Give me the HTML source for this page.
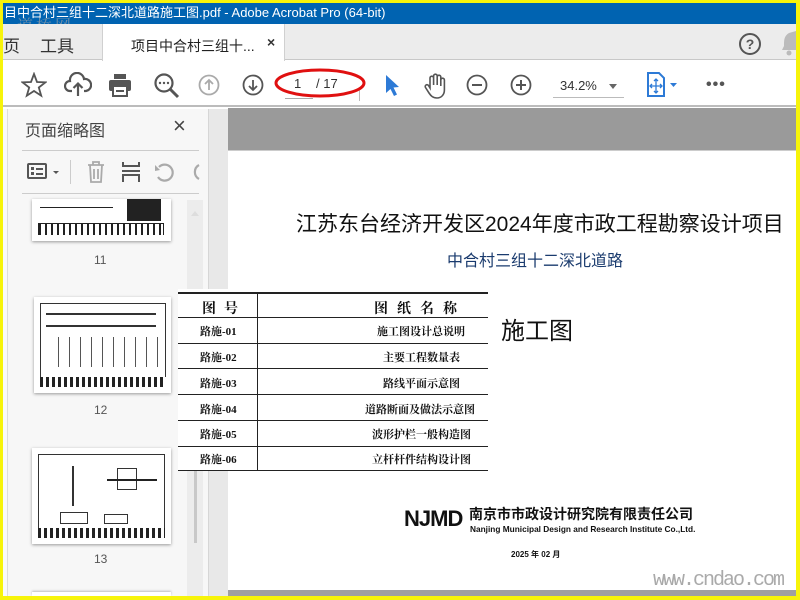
<!DOCTYPE html>
<html><head><meta charset="utf-8"><style>
*{margin:0;padding:0;box-sizing:border-box}
body{width:800px;height:600px;position:relative;overflow:hidden;background:#f7f40a;font-family:"Liberation Sans","Noto Sans CJK SC",sans-serif}
.a{position:absolute}
.ic{position:absolute}
</style></head><body>
<div class="a" style="left:3px;top:3px;width:793px;height:593px;background:#fff;overflow:hidden">
 <div class="a" style="left:0;top:0;width:793px;height:21px;background:#0063b1;color:#fff;font-size:13px;line-height:20px;padding-left:1px;white-space:nowrap">目中合村三组十二深北道路施工图.pdf - Adobe Acrobat Pro (64-bit)</div>
 <div class="a" style="left:14px;top:10px;color:#8a9aa8;font-size:16px;font-family:'Noto Serif CJK SC',serif;letter-spacing:3px;opacity:.8">道桥网</div>
 <div class="a" style="left:0;top:21px;width:793px;height:36px;background:#ececec;border-bottom:1px solid #c8c8c8"></div>
 <div class="a" style="left:0;top:29px;font-size:17px;color:#333">页</div>
 <div class="a" style="left:37px;top:29px;font-size:17px;color:#333">工具</div>
 <div class="a" style="left:99px;top:21px;width:183px;height:37px;background:#fff;border-left:1px solid #d0d0d0;border-right:1px solid #d0d0d0"></div>
 <div class="a" style="left:128px;top:33px;font-size:14px;color:#222">项目中合村三组十...</div>
 <div class="a" style="left:264px;top:31px;font-size:14px;color:#333;font-weight:bold">×</div>
 <svg class="ic" style="left:735px;top:29px" width="24" height="24"><circle cx="12" cy="12" r="10" fill="none" stroke="#555" stroke-width="2"/><text x="12" y="17" font-size="14" text-anchor="middle" fill="#555" font-weight="bold" font-family="Liberation Sans">?</text></svg>
 <svg class="ic" style="left:778px;top:28px" width="16" height="26"><path d="M8 2 C3 5 3 9 3 15 L1 19 H15 V0" fill="#bbb"/><circle cx="8" cy="22" r="2.5" fill="#bbb"/></svg>
 <div class="a" style="left:0;top:58px;width:793px;height:46px;background:#fff;border-bottom:2px solid #bcbcbc"></div>
 <svg class="ic" style="left:18px;top:69px" width="26" height="26"><path d="M13 2 L16 10 L24.5 10.3 L17.8 15.5 L20.2 23.7 L13 19 L5.8 23.7 L8.2 15.5 L1.5 10.3 L10 10 Z" fill="none" stroke="#555" stroke-width="1.8"/></svg>
 <svg class="ic" style="left:61px;top:69px" width="28" height="26"><path d="M8 19 H6 A5 5 0 0 1 6 9 A7 7 0 0 1 20 7 A5.5 5.5 0 0 1 22 19 H20" fill="none" stroke="#555" stroke-width="2.2"/><path d="M14 24 V12 M9.5 16 L14 11.5 L18.5 16" fill="none" stroke="#555" stroke-width="2.2"/></svg>
 <svg class="ic" style="left:105px;top:70px" width="24" height="24"><rect x="6" y="1" width="12" height="5" fill="#555"/><rect x="1" y="7" width="22" height="11" rx="2" fill="#555"/><rect x="5" y="13" width="14" height="10" fill="#fff" stroke="#555" stroke-width="2"/><rect x="8" y="17" width="8" height="2" fill="#555"/></svg>
 <svg class="ic" style="left:150px;top:69px" width="27" height="27"><circle cx="11" cy="11" r="8.5" fill="none" stroke="#555" stroke-width="2.2"/><path d="M17 17 L25 25" stroke="#555" stroke-width="3"/><circle cx="7" cy="11" r="1.2" fill="#555"/><circle cx="11" cy="11" r="1.2" fill="#555"/><circle cx="15" cy="11" r="1.2" fill="#555"/></svg>
 <svg class="ic" style="left:195px;top:71px" width="22" height="22"><circle cx="11" cy="11" r="9.5" fill="none" stroke="#aaa" stroke-width="1.8"/><path d="M11 16 V6 M7 10 L11 6 L15 10" fill="none" stroke="#aaa" stroke-width="1.8"/></svg>
 <svg class="ic" style="left:239px;top:71px" width="22" height="22"><circle cx="11" cy="11" r="9.5" fill="none" stroke="#555" stroke-width="1.8"/><path d="M11 6 V16 M7 12 L11 16 L15 12" fill="none" stroke="#555" stroke-width="1.8"/></svg>
 <div class="a" style="left:282px;top:95px;width:28px;height:1px;background:#aaa"></div>
 <div class="a" style="left:291px;top:73px;font-size:13px;color:#333">1</div>
 <div class="a" style="left:313px;top:73px;font-size:13px;color:#333">/ 17</div>
 <div class="a" style="left:356px;top:86px;width:1px;height:12px;background:#bbb"></div>
 <svg class="ic" style="left:270px;top:63px" width="94" height="36"><ellipse cx="47" cy="17" rx="44" ry="13" fill="none" stroke="#e01010" stroke-width="3"/></svg>
 <svg class="ic" style="left:380px;top:70px" width="20" height="26"><path d="M3 2 L3 20 L7.5 16 L11 23 L14 21.5 L10.5 14.5 L16 14 Z" fill="#2d7ad6"/></svg>
 <svg class="ic" style="left:420px;top:69px" width="26" height="28"><path d="M7 16 V6 a1.8 1.8 0 0 1 3.6 0 V13 V4 a1.8 1.8 0 0 1 3.6 0 V13 V5 a1.8 1.8 0 0 1 3.6 0 V14 V8 a1.8 1.8 0 0 1 3.6 0 V18 C21.4 23 18 26 14 26 C10 26 8 24 6 21 L2.5 15.5 a1.8 1.8 0 0 1 3 -2 Z" fill="none" stroke="#555" stroke-width="1.6"/></svg>
 <svg class="ic" style="left:463px;top:71px" width="22" height="22"><circle cx="11" cy="11" r="9.5" fill="none" stroke="#555" stroke-width="1.8"/><path d="M6 11 H16" stroke="#555" stroke-width="2"/></svg>
 <svg class="ic" style="left:507px;top:71px" width="22" height="22"><circle cx="11" cy="11" r="9.5" fill="none" stroke="#555" stroke-width="1.8"/><path d="M6 11 H16 M11 6 V16" stroke="#555" stroke-width="2"/></svg>
 <div class="a" style="left:557px;top:75px;font-size:13px;color:#333">34.2%</div>
 <div class="a" style="left:606px;top:81px;border:4px solid transparent;border-top:5px solid #666"></div>
 <div class="a" style="left:550px;top:94px;width:71px;height:1px;background:#bbb"></div>
 <svg class="ic" style="left:643px;top:69px" width="36" height="26"><path d="M2 1 H13 L18 6 V24 H2 Z" fill="none" stroke="#2d7ad6" stroke-width="2"/><path d="M10 7 V21 M4 14 H16 M8 9 L10 7 L12 9 M8 19 L10 21 L12 19 M6 12 L4 14 L6 16 M14 12 L16 14 L14 16" fill="none" stroke="#2d7ad6" stroke-width="1.3"/><path d="M24 11 H31 L27.5 15 Z" fill="#2d7ad6"/></svg>
 <div class="a" style="left:703px;top:73px;font-size:16px;color:#555;letter-spacing:1px;font-weight:bold">•••</div>

 <div class="a" style="left:0;top:106px;width:206px;height:487px;background:#f7f7f7;border-right:1px solid #d6d6d6"></div>
 <div class="a" style="left:0;top:106px;width:5px;height:487px;background:#fafafa;border-right:1px solid #ddd"></div>
 <div class="a" style="left:22px;top:114px;font-size:16px;color:#444">页面缩略图</div>
 <div class="a" style="left:170px;top:110px;font-size:22px;color:#444">×</div>
 <div class="a" style="left:19px;top:147px;width:177px;height:1px;background:#ccc"></div>
 <div class="a" style="left:19px;top:190px;width:177px;height:1px;background:#ccc"></div>
 <svg class="ic" style="left:22px;top:158px" width="40" height="22"><rect x="3" y="3" width="18" height="14" rx="1" fill="none" stroke="#555" stroke-width="2"/><rect x="6" y="6" width="3" height="3" fill="#555"/><rect x="6" y="11" width="3" height="3" fill="#555"/><rect x="11" y="7" width="7" height="2" fill="#555"/><rect x="11" y="12" width="7" height="2" fill="#555"/><path d="M28 10 H34 L31 13 Z" fill="#555"/></svg>
 <div class="a" style="left:67px;top:157px;width:1px;height:24px;background:#ccc"></div>
 <svg class="ic" style="left:82px;top:157px" width="22" height="24"><path d="M3 5 H19 M8 5 V2 H14 V5 M5 5 L6 22 H16 L17 5 M9 9 V19 M13 9 V19" fill="none" stroke="#aaa" stroke-width="1.8"/></svg>
 <svg class="ic" style="left:117px;top:157px" width="22" height="24"><path d="M3 2 V6 H19 V2 M3 22 V15 H19 V22 M2 11 H20" fill="none" stroke="#555" stroke-width="2"/></svg>
 <svg class="ic" style="left:150px;top:158px" width="48" height="22"><path d="M6 6 A8 8 0 1 1 5 16" fill="none" stroke="#aaa" stroke-width="2.2"/><path d="M2 4 L7 9 L2 10 Z" fill="#aaa"/><path d="M46 4 A8 8 0 0 0 46 18" fill="none" stroke="#aaa" stroke-width="2.2"/></svg>
 <div class="a" style="left:29px;top:196px;width:139px;height:42px;background:#fff;box-shadow:0 1px 3px #999;overflow:hidden">
  <div class="a" style="left:8px;top:8px;width:73px;height:1px;background:#222"></div>
  <div class="a" style="left:95px;top:0;width:34px;height:22px;background:#222"></div>
  <div class="a" style="left:6px;top:24px;width:126px;height:12px;border:1px solid #222;border-bottom:0;background:repeating-linear-gradient(90deg,#222 0 2px,#fff 2px 6px)"></div>
 </div>
 <div class="a" style="left:91px;top:250px;font-size:12px;color:#555">11</div>
 <div class="a" style="left:31px;top:294px;width:137px;height:96px;background:#fff;box-shadow:0 1px 3px #999">
  <div class="a" style="left:6px;top:6px;width:126px;height:84px;border:1px solid #333"></div>
  <div class="a" style="left:12px;top:16px;width:110px;height:14px;border-top:2px solid #333;border-bottom:2px solid #333"></div>
  <div class="a" style="left:14px;top:40px;width:110px;height:30px;background:repeating-linear-gradient(90deg,transparent 0 10px,#555 10px 11px)"></div>
  <div class="a" style="left:6px;top:80px;width:126px;height:10px;background:repeating-linear-gradient(90deg,#222 0 3px,#fff 3px 6px)"></div>
 </div>
 <div class="a" style="left:91px;top:400px;font-size:12px;color:#555">12</div>
 <div class="a" style="left:29px;top:445px;width:139px;height:96px;background:#fff;box-shadow:0 1px 3px #999">
  <div class="a" style="left:6px;top:6px;width:127px;height:84px;border:1px solid #333"></div>
  <div class="a" style="left:40px;top:18px;width:2px;height:40px;background:#333"></div>
  <div class="a" style="left:85px;top:20px;width:20px;height:22px;border:1px solid #333"></div>
  <div class="a" style="left:75px;top:31px;width:50px;height:2px;background:#222"></div>
  <div class="a" style="left:28px;top:64px;width:28px;height:12px;border:1px solid #333"></div>
  <div class="a" style="left:72px;top:66px;width:24px;height:10px;border:1px solid #333"></div>
  <div class="a" style="left:6px;top:80px;width:127px;height:10px;background:repeating-linear-gradient(90deg,#222 0 3px,#fff 3px 6px)"></div>
 </div>
 <div class="a" style="left:91px;top:549px;font-size:12px;color:#555">13</div>
 <div class="a" style="left:29px;top:589px;width:139px;height:4px;background:#fff;box-shadow:0 -1px 2px #bbb"></div>
 <div class="a" style="left:184px;top:197px;width:16px;height:396px;background:#ececec"></div>
 <div class="a" style="left:191px;top:300px;width:3px;height:240px;background:#c8c8c8"></div>
 <div class="a" style="left:188px;top:204px;border:4px solid transparent;border-bottom:5px solid #ddd"></div>

 <div class="a" style="left:206px;top:106px;width:19px;height:487px;background:#e8e8e8"></div>
 <div class="a" style="left:225px;top:105px;width:568px;height:43px;background:#9a9a9a;border-bottom:1px solid #ccc"></div>
 <div class="a" style="left:225px;top:148px;width:568px;height:439px;background:#fff"></div>
 <div class="a" style="left:225px;top:587px;width:568px;height:6px;background:#a0a0a0"></div>
 <div class="a" style="left:293px;top:205px;font-size:21px;color:#111;white-space:nowrap">江苏东台经济开发区2024年度市政工程勘察设计项目</div>
 <div class="a" style="left:444px;top:244px;font-size:16px;color:#1a3b6e;white-space:nowrap">中合村三组十二深北道路</div>
 <div class="a" style="left:498px;top:308px;font-size:24px;color:#111">施工图</div>
 <div class="a" style="left:175px;top:286px;width:310px;height:181px;background:#fff;font-family:'Liberation Serif','Noto Serif CJK SC',serif;font-weight:bold;font-size:11px;color:#111">
  <div class="a" style="left:0;top:3px;width:310px;height:2px;background:#222"></div>
  <div class="a" style="left:79px;top:3px;width:1px;height:178px;background:#222"></div>
  <div class="a" style="left:24px;top:9px;font-size:14px;letter-spacing:8px">图号</div>
  <div class="a" style="left:196px;top:9px;font-size:14px;letter-spacing:9px">图纸名称</div>
  <div class="a" style="left:0;top:28px;width:310px;height:1px;background:#222"></div>
  <div class="a" style="left:0;top:54px;width:310px;height:1px;background:#222"></div>
  <div class="a" style="left:0;top:79px;width:310px;height:1px;background:#222"></div>
  <div class="a" style="left:0;top:105px;width:310px;height:1px;background:#222"></div>
  <div class="a" style="left:0;top:131px;width:310px;height:1px;background:#222"></div>
  <div class="a" style="left:0;top:157px;width:310px;height:1px;background:#222"></div>
  <div class="a" style="left:0;top:181px;width:310px;height:1px;background:#222"></div>
  <div class="a" style="left:22px;top:34px">路施-01</div><div class="a" style="left:199px;top:34px">施工图设计总说明</div>
  <div class="a" style="left:22px;top:60px">路施-02</div><div class="a" style="left:205px;top:60px">主要工程数量表</div>
  <div class="a" style="left:22px;top:86px">路施-03</div><div class="a" style="left:205px;top:86px">路线平面示意图</div>
  <div class="a" style="left:22px;top:112px">路施-04</div><div class="a" style="left:187px;top:112px">道路断面及做法示意图</div>
  <div class="a" style="left:22px;top:137px">路施-05</div><div class="a" style="left:194px;top:137px">波形护栏一般构造图</div>
  <div class="a" style="left:22px;top:162px">路施-06</div><div class="a" style="left:194px;top:162px">立杆杆件结构设计图</div>
 </div>
 <div class="a" style="left:401px;top:503px;font-size:22px;font-weight:bold;color:#111;letter-spacing:-1px;font-family:'Liberation Sans',sans-serif">NJMD</div>
 <div class="a" style="left:466px;top:501px;font-size:14px;font-weight:bold;color:#111;white-space:nowrap">南京市市政设计研究院有限责任公司</div>
 <div class="a" style="left:467px;top:521px;font-size:8.3px;font-weight:bold;color:#111;white-space:nowrap">Nanjing Municipal Design and Research Institute Co.,Ltd.</div>
 <div class="a" style="left:508px;top:546px;font-size:8px;font-weight:bold;color:#111;white-space:nowrap">2025 年 02 月</div>
 <div class="a" style="left:650px;top:566px;font-size:20px;color:#aaa;font-family:'Liberation Mono',monospace;letter-spacing:-2px;white-space:nowrap">www.cndao.com</div>
</div>
</body></html>
